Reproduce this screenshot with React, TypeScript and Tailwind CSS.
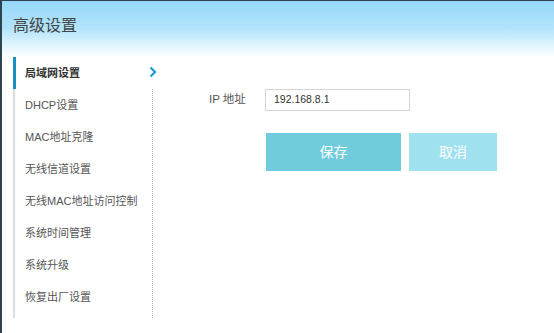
import React from "react";

const items = [
  "局域网设置",
  "DHCP设置",
  "MAC地址克隆",
  "无线信道设置",
  "无线MAC地址访问控制",
  "系统时间管理",
  "系统升级",
  "恢复出厂设置",
];

export default function App() {
  return (
    <div
      className="w-[554px] h-[333px] bg-white border-l-2 border-t border-[#2e4350] overflow-hidden flex flex-col text-[#555]"
      style={{ fontFamily: '"Liberation Sans", "Noto Sans CJK SC", sans-serif' }}
    >
      <div className="h-[56px] shrink-0 bg-gradient-to-b from-[#95d8f9] via-[#b3e4fb] to-white pl-[11px] pt-[13px]">
        <div className="text-[16px] leading-[24px] text-[#444]">高级设置</div>
      </div>
      <div className="flex">
        <div className="ml-[11px] w-[3px] flex flex-col">
          <div className="h-[32px] bg-[#1b8fc2]" />
          <div className="h-[229px] bg-[#dcdcdc] w-[2px]" />
        </div>
        <div className="w-[123px] flex flex-col">
          {items.map((t, i) => (
            <div
              key={t}
              className={`h-[32px] flex items-center pl-[9px] text-[11px] whitespace-nowrap ${
                i === 0 ? "font-bold text-[#333]" : "text-[#555]"
              }`}
            >
              {t}
            </div>
          ))}
        </div>
        <div className="w-[14px] flex flex-col items-end">
          <div className="h-[32px] flex items-center">
            <svg width="8" height="12" viewBox="0 0 8 12" className="mb-[2px] -mr-[4px]">
              <path d="M1.5 1.5 L6 6 L1.5 10.5" fill="none" stroke="#1e9ad6" strokeWidth="2.2" />
            </svg>
          </div>
          <div className="h-[229px] border-r border-dotted border-[#bbb]" />
        </div>
        <div className="flex flex-col pl-[56px] pt-[32px]">
          <div className="flex items-center">
            <div className="w-[56px] text-[11.5px] text-[#555]">IP 地址</div>
            <div className="w-[145px] h-[22px] border border-[#d4d4d4] flex items-center pl-[8px] text-[10.5px] text-[#333]">
              192.168.8.1
            </div>
          </div>
          <div className="flex gap-[8px] mt-[22px] ml-[57px]">
            <div className="w-[135px] h-[38px] bg-[#70cbdc] text-white text-[14px] flex items-center justify-center">
              保存
            </div>
            <div className="w-[88px] h-[38px] bg-[#9fe1ee] text-white text-[14px] flex items-center justify-center">
              取消
            </div>
          </div>
        </div>
      </div>
    </div>
  );
}
